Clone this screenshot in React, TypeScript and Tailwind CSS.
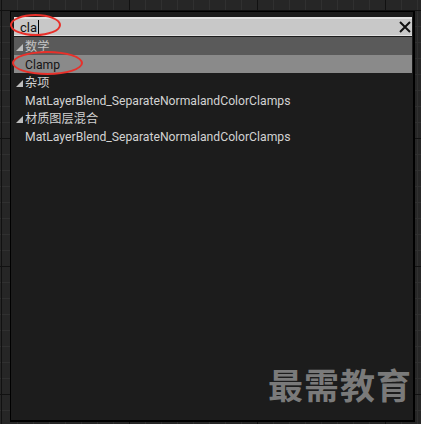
import React from 'react';

const rows = [
  { kind: 'cat', label: '数学', tone: 'header' },
  { kind: 'item', label: 'Clamp', tone: 'selected' },
  { kind: 'cat', label: '杂项', tone: '' },
  { kind: 'item', label: 'MatLayerBlend_SeparateNormalandColorClamps', tone: '' },
  { kind: 'cat', label: '材质图层混合', tone: '' },
  { kind: 'item', label: 'MatLayerBlend_SeparateNormalandColorClamps', tone: '' },
];

function Arrow() {
  return (
    <svg width="9" height="9" viewBox="0 0 9 9" className="mr-[1px] shrink-0">
      <polygon points="8,1 8,8 1,8" fill="currentColor" />
    </svg>
  );
}

export default function App() {
  return (
    <div
      className="w-[421px] h-[424px] overflow-hidden pl-[10px] pt-[11px] bg-[#262626] [background-image:linear-gradient(to_right,#111_1px,transparent_1px),linear-gradient(to_bottom,#111_1px,transparent_1px),linear-gradient(to_right,#303030_1px,transparent_1px),linear-gradient(to_bottom,#303030_1px,transparent_1px)] [background-size:128px_128px,128px_128px,16px_16px,16px_16px] [background-position:1px_10px]"
      style={{ fontFamily: 'Roboto, "Noto Sans CJK SC", sans-serif' }}
    >
      <div className="relative w-[405px] h-[411px] border border-black border-r-2 border-b-2 bg-[#1c1c1c] pl-[3px] pr-[1px] pt-[5px]">
        <div className="flex items-center h-[19px] bg-[#c8c8c8] border-t-2 border-b border-[#e2e2e2] pl-[6px] pr-[1px]">
          <span className="text-[13px] leading-none text-[#111]">cla</span>
          <span className="ml-[1px] w-[1px] h-[14px] bg-black" />
          <span className="flex-1" />
          <svg width="12" height="12" viewBox="0 0 12 12">
            <path d="M1 1 L11 11 M11 1 L1 11" stroke="#111" strokeWidth="2" />
          </svg>
        </div>
        <div className="mt-[1px] flex flex-col">
          {rows.map((r, i) => (
            <div
              key={i}
              className={
                'flex items-center h-[18px] pt-[2px] text-[12.2px] ' +
                (r.tone === 'header'
                  ? 'bg-[#5a5a5a] text-[#c4c4c4]'
                  : r.tone === 'selected'
                  ? 'bg-[#8a8a8a] text-[#151515]'
                  : 'text-[#d2d2d2]')
              }
            >
              {r.kind === 'cat' ? (
                <span className="flex items-center pl-[1px] text-[#bdbdbd]">
                  <Arrow />
                  <span className={r.tone === 'header' ? 'text-[#c4c4c4]' : 'text-[#d2d2d2]'}>{r.label}</span>
                </span>
              ) : (
                <span className="pl-[11px]">{r.label}</span>
              )}
            </div>
          ))}
        </div>

        <div className="absolute left-[-1px] top-[2px] w-[51px] h-[22px] rounded-[50%] border-[2.5px] border-[#e8302a]" />
        <div className="absolute left-[1px] top-[39px] w-[71px] h-[24px] rounded-[50%] border-[2.5px] border-[#e8302a]" />

        <div
          className="absolute right-[1px] bottom-[19px] text-[35px] font-bold leading-none tracking-[1px] text-[#7a7a7a]"
          style={{ fontFamily: '"Noto Sans CJK SC", sans-serif' }}
        >
          最需教育
        </div>
      </div>
    </div>
  );
}
